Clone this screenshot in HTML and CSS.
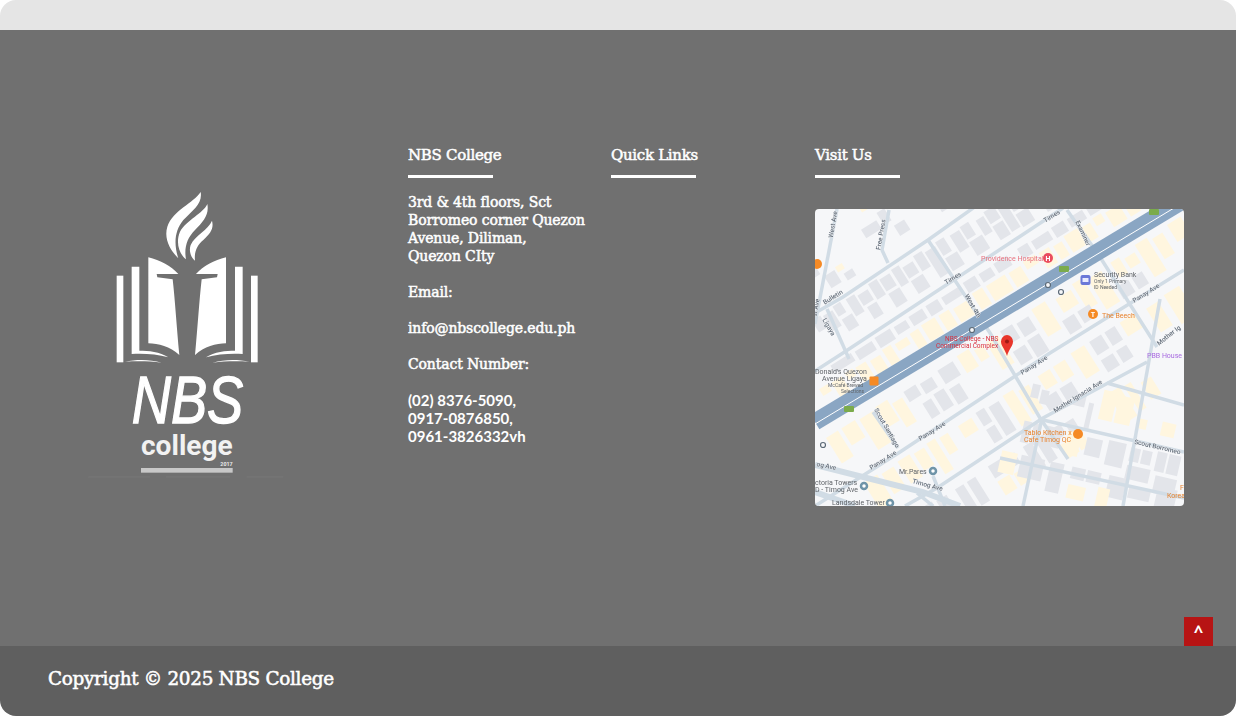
FILE: index.html
```html
<!DOCTYPE html>
<html lang="en">
<head>
<meta charset="utf-8">
<title>NBS College</title>
<link rel="stylesheet" href="styles.css">
</head>
<body>
<div class="page">
  <div class="topband"></div>
  <main class="main">
    <div class="logo-col">
      <svg class="logo" viewBox="0 0 660 930" role="img" aria-label="NBS College logo">
        <g class="logo-w">
          <path d="M362 36C340 70 280 90 262 140C250 180 275 215 295 235C280 190 285 150 310 120C340 90 368 70 362 36Z"/>
          <path d="M382 72C370 100 320 120 300 155C285 190 300 225 318 238C312 205 320 175 345 150C370 125 388 105 382 72Z"/>
          <path d="M396 122C385 150 345 165 332 195C325 215 335 235 345 242C342 215 352 195 370 180C392 160 402 145 396 122Z"/>
          <path d="M205 232C240 240 275 260 295 282L230 282L232 292L278 298C285 360 290 440 298 525C270 500 235 490 205 490Z"/>
          <path d="M438 232C403 240 368 260 348 282L413 282L411 292L365 298C358 360 353 440 345 525C373 500 408 490 438 490Z"/>
          <path d="M155 260H178V512C205 512 240 515 265 532C230 522 190 520 155 522Z"/>
          <path d="M488 260H465V512C438 512 403 515 378 532C413 522 453 520 488 522Z"/>
          <path d="M110 287H130V547H110Z"/>
          <path d="M513 287H533V547H513Z"/>
          <path d="M135 545C170 538 210 538 245 548C210 543 170 543 135 545Z"/>
          <path d="M508 545C473 538 433 538 398 548C433 543 473 543 508 545Z"/>
        </g>
        <text class="logo-nbs" x="155" y="728" textLength="335" lengthAdjust="spacingAndGlyphs">NBS</text>
        <text class="logo-college" x="183" y="825" textLength="275" lengthAdjust="spacingAndGlyphs">college</text>
        <text class="logo-year" x="421" y="857" textLength="37" lengthAdjust="spacingAndGlyphs">2017</text>
        <rect class="logo-bar" x="183" y="864" width="275" height="14"/>
        <path class="logo-dash" d="M25 891H210M258 891H450M500 891H610"/>
      </svg>
    </div>

    <section class="col">
      <h2 class="col-title">NBS College</h2>
      <div class="col-body">
        <p>3rd &amp; 4th floors, Sct<br>Borromeo corner Quezon<br>Avenue, Diliman,<br>Quezon CIty</p>
        <p>Email:</p>
        <p>info@nbscollege.edu.ph</p>
        <p>Contact Number:</p>
        <p class="nums">(02) 8376-5090,<br>0917-0876850,<br>0961-3826332vh</p>
      </div>
    </section>

    <section class="col">
      <h2 class="col-title">Quick Links</h2>
    </section>

    <section class="col">
      <h2 class="col-title">Visit Us</h2>
      <svg class="map" viewBox="0 0 369 297" role="img" aria-label="Map of NBS College">
        <rect class="m-bg" width="369" height="297"/>
        <g transform="rotate(-32)">
          <path class="m-gray" d="M-62 93h10v14h-10zM-50 95h11v18h-11zM-37 92h9v12h-9zM-36 108h12v14h-12zM-22 93h10v20h-10zM-10 96h12v12h-12zM-8 111h11v14h-11zM5 92h10v18h-10zM17 94h12v14h-12zM17 111h13v16h-13zM32 92h9v20h-9zM43 96h12v13h-12zM43 112h14v15h-14zM58 92h10v18h-10zM70 95h12v30h-12zM84 92h10v16h-10zM84 111h14v15h-14zM100 94h11v20h-11zM113 92h10v15h-10zM113 110h15v16h-15zM130 95h9v18h-9zM141 92h12v14h-12zM141 109h12v16h-12zM155 96h10v28h-10zM167 93h11v15h-11zM167 111h14v15h-14zM183 95h11v18h-11zM196 92h13v14h-13zM196 109h13v17h-13zM211 95h11v30h-11zM224 93h12v15h-12zM224 111h14v14h-14z"/>
          <path class="m-gray" d="M-72 62h9v9h-9zM-40 46h10v12h-10zM-28 62h12v14h-12zM-10 70h10v8h-10zM28 42h18v10h-18zM50 36h9v14h-9zM58 56h12v12h-12zM74 34h14v11h-14zM92 42h9v9h-9zM106 52h12v18h-12zM122 42h14v12h-14zM122 58h16v18h-16zM142 44h12v12h-12zM142 60h14v16h-14zM160 52h10v22h-10zM174 30h14v14h-14zM174 50h14v22h-14zM192 38h10v12h-10zM192 54h14v20h-14zM210 30h12v14h-12zM210 50h10v24h-10zM226 40h12v30h-12zM242 50h12v20h-12zM258 44h12v26h-12zM274 48h14v20h-14zM292 52h12v20h-12z"/>
          <path class="m-yellow" d="M-60 78h8v6h-8zM-14 60h8v6h-8zM38 18h20v10h-20zM64 12h8v8h-8zM94 6h18v12h-18zM118 22h8v8h-8zM150 10h14v10h-14zM210 8h20v10h-20zM248 20h12v8h-12zM280 18h14v12h-14z"/>
          <path class="m-gray" d="M-70 141h24v9h-24zM-42 142h20v10h-20zM-18 141h18v12h-18zM4 142h14v9h-14zM22 141h16v11h-16zM42 141h14v12h-14zM60 142h22v9h-22zM86 141h14v12h-14zM104 142h14v10h-14zM122 141h16v11h-16zM150 141h12v12h-12zM166 142h20v10h-20zM190 141h14v12h-14zM208 142h18v10h-18zM230 141h16v11h-16zM250 142h14v10h-14zM268 141h18v12h-18z"/>
          <path class="m-yellow" d="M-92 155h10v8h-10zM-78 156h12v18h-12zM-62 155h9v8h-9zM-50 156h12v18h-12zM-34 158h12v16h-12zM-18 155h10v19h-10zM-4 157h14v8h-14zM14 156h10v18h-10zM28 155h16v19h-16zM48 156h12v18h-12zM64 158h20v16h-20zM88 155h12v19h-12zM104 156h22v18h-22zM130 157h14v17h-14zM148 155h14v9h-14zM166 156h12v18h-12zM182 158h10v16h-10zM196 155h16v19h-16zM216 157h10v17h-10zM230 155h10v9h-10zM244 157h16v17h-16zM264 155h12v19h-12zM280 157h12v17h-12z"/>
          <path class="m-yellow" d="M-112 200h14v30h-14zM-94 200h16v20h-16zM-74 202h16v36h-16zM-54 200h14v24h-14zM-38 206h12v28h-12zM42 200h14v20h-14zM60 204h10v14h-10zM74 204h14v32h-14zM130 200h16v32h-16zM156 204h18v16h-18zM178 200h12v30h-12zM194 204h16v36h-16zM222 202h10v18h-10zM236 206h12v12h-12zM252 200h14v38h-14zM270 204h12v24h-12zM290 200h16v20h-16zM310 204h12v30h-12z"/>
          <path class="m-gray" d="M-22 202h14v12h-14zM-4 204h14v12h-14zM-12 222h10v18h-10zM2 220h12v20h-12zM18 202h18v16h-18zM18 224h12v18h-12zM92 202h14v16h-14zM110 204h14v16h-14zM92 226h14v16h-14zM110 224h14v20h-14zM150 226h14v16h-14zM168 226h14v14h-14zM214 226h14v14h-14zM232 226h12v14h-12z"/>
          <path class="m-yellow" d="M-104 258h16v32h-16zM-84 260h14v24h-14zM-64 258h14v26h-14zM-46 260h12v20h-12zM-30 258h10v36h-10zM-16 260h10v20h-10zM6 260h16v14h-16zM60 258h12v36h-12zM76 262h12v28h-12zM100 260h14v16h-14zM118 260h14v18h-14zM140 258h16v30h-16zM198 258h18v16h-18zM228 260h14v28h-14zM250 258h18v34h-18z"/>
          <path class="m-gray" d="M28 258h10v16h-10zM28 278h10v16h-10zM42 260h12v34h-12zM92 282h16v14h-16zM112 282h14v14h-14zM162 258h14v16h-14zM180 258h12v16h-12zM162 280h14v14h-14zM180 280h12v14h-12zM274 260h12v30h-12zM290 262h12v24h-12z"/>
          <path class="m-gray" d="M-70 310h14v14h-14zM-52 312h12v14h-12zM-30 312h10v28h-10zM-16 312h10v28h-10zM10 310h14v14h-14zM28 312h12v12h-12zM50 312h10v28h-10zM64 312h10v28h-10zM82 312h12v12h-12zM98 314h10v12h-10z"/>
          <path class="m-yellow" d="M-70 330h14v14h-14zM-52 330h12v14h-12zM10 328h14v16h-14zM28 330h12v14h-12zM82 330h14v16h-14zM98 332h10v14h-10zM150 312h14v34h-14zM168 314h8v30h-8zM184 320h12v20h-12z"/>
        </g>
        <g transform="rotate(13 280 240)">
          <path class="m-gray" d="M205 190h8v14h-8zM215 194h8v14h-8zM246 190h14v12h-14zM264 196h5v26h-5zM205 228h8v22h-8zM215 228h8v22h-8zM228 228h16v20h-16zM270 230h16v18h-16zM292 228h18v25h-18zM315 230h10v14h-10zM327 230h10v14h-10zM315 248h24v14h-24zM342 228h10v20h-10zM354 228h12v20h-12zM345 252h22v18h-22zM210 262h24v22h-24zM240 262h14v30h-14zM262 262h14v12h-14zM278 262h14v12h-14zM300 262h18v22h-18zM322 268h22v12h-22zM350 262h20v24h-20z"/>
          <path class="m-yellow" d="M276 180h14v30h-14zM292 182h16v28h-16zM250 228h14v24h-14zM296 190h10v8h-10zM190 262h16v22h-16zM262 280h18v14h-18zM292 276h12v20h-12zM340 198h14v14h-14zM315 200h10v10h-10z"/>
        </g>
        <g class="m-road">
          <path d="M22 0L0 115"/>
          <path d="M185 -20L113 31L28 88L0 104"/>
          <path d="M248 -1L28 144L0 162"/>
          <path d="M74 1L67 41L73 54"/>
          <path d="M113 31L175 124L225 209L253 250"/>
          <path d="M252 1L285 48L342 138"/>
          <path d="M12 100L34 150"/>
          <path d="M369 61L235 144L85 243L0 297"/>
          <path d="M332 153L228 209L122 279L90 297"/>
          <path d="M228 211L369 243"/>
          <path d="M335 146L308 297"/>
          <path d="M345 90L335 146"/>
          <path d="M292 174L369 196"/>
          <path d="M185 249L369 289"/>
          <path d="M227 209L208 297"/>
          <path d="M58 203L83 239"/>
          <path d="M102 284L118 297"/>
          <path d="M118 267L130 297"/>
        </g>
        <path class="m-road-wide" d="M0 256L108 283L145 297"/>
        <path class="m-road-wide" d="M0 283L20 290L40 297"/>
        <path class="m-hw" d="M0 213L369 -9"/>
        <path class="m-hw-line" d="M0 215L369 -7"/>

        <g class="m-lbl-road">
          <text transform="rotate(-80 20 16)" x="20" y="16">West Ave</text>
          <text transform="rotate(-80 68 26)" x="68" y="26">Free Press</text>
          <text transform="rotate(-80 3 99)" x="3" y="99">st Ave</text>
          <text transform="rotate(-32 19 90)" x="19" y="90">Bulletin</text>
          <text transform="rotate(-32 139 71)" x="139" y="71">Times</text>
          <text transform="rotate(-32 238 9)" x="238" y="9">Times</text>
          <text transform="rotate(60 156 98)" x="156" y="98">West 4th</text>
          <text transform="rotate(60 12 119)" x="12" y="119">Ligaya</text>
          <text transform="rotate(65 266 25)" x="266" y="25">Examiner</text>
          <text transform="rotate(-32 332 86)" x="332" y="86">Panay Ave</text>
          <text transform="rotate(-38 355 128)" x="355" y="128">Mother Ig</text>
          <text transform="rotate(60 70 220)" x="70" y="220">Scout Santiago</text>
          <text transform="rotate(-32 118 224)" x="118" y="224">Panay Ave</text>
          <text transform="rotate(-32 69 253)" x="69" y="253">Panay Ave</text>
          <text transform="rotate(12 11 259)" x="11" y="259">og Ave</text>
          <text transform="rotate(15 112 278)" x="112" y="278">Timog Ave</text>
          <text transform="rotate(-32 220 158)" x="220" y="158">Panay Ave</text>
          <text transform="rotate(-32 264 189)" x="264" y="189">Mother Ignacia Ave</text>
          <text transform="rotate(13 342 240)" x="342" y="240">Scout Borromeo</text>
        </g>

        <text class="m-red" x="166" y="52">Providence Hospital</text>
        <circle class="m-pin-red" cx="233" cy="49" r="5"/>
        <text class="m-pin-h" x="233" y="51.500">H</text>
        <text class="m-dred" x="130" y="132">NBS College - NBS</text>
        <text class="m-dred" x="121" y="138.500">Commercial Complex</text>
        <path class="m-marker" d="M192 147C190 140 186 137 186 132.500A6 6.500 0 0 1 198 132.500C198 137 194 140 192 147Z"/>
        <circle class="m-marker-dot" cx="192" cy="132.500" r="2"/>

        <rect class="m-bank" x="265.500" y="66" width="10" height="10" rx="2"/>
        <rect class="m-bank-in" x="267.500" y="69" width="6" height="4"/>
        <text class="m-grey" x="279" y="68">Security Bank</text>
        <text class="m-small" x="279" y="74">Only 1 Primary</text>
        <text class="m-small" x="279" y="79.500">ID Needed</text>

        <circle class="m-pin-or" cx="278" cy="105" r="5"/>
        <text class="m-pin-h" x="278" y="107.500">T</text>
        <text class="m-or" x="287" y="109">The Beech</text>
        <circle class="m-pin-or" cx="2" cy="55" r="5"/>
        <rect class="m-pin-or" x="54.500" y="167.500" width="9" height="9" rx="1"/>
        <circle class="m-pin-or" cx="263" cy="225" r="5"/>
        <text class="m-or" x="209" y="226">Tablo Kitchen x</text>
        <text class="m-or" x="209" y="232.500">Cafe Timog QC</text>
        <text class="m-or" x="365" y="281">F</text>
        <text class="m-or" x="352" y="289">Korea</text>
        <text class="m-purple" x="332" y="149">PBB House</text>

        <text class="m-grey" x="0" y="165">Donald's Quezon</text>
        <text class="m-grey" x="7" y="172">Avenue Ligaya</text>
        <text class="m-small" x="13" y="178">McCafé Brewed</text>
        <text class="m-small" x="26" y="183.500">Selections</text>
        <text class="m-grey" x="84" y="265">Mr.Pares</text>
        <text class="m-grey" x="0" y="276">ctoria Towers</text>
        <text class="m-grey" x="0" y="283">D - Timog Ave</text>
        <text class="m-grey" x="17" y="296">Landsdale Tower</text>

        <g class="m-teal">
          <circle cx="118" cy="262" r="3"/>
          <circle cx="49" cy="277" r="3"/>
          <circle cx="75" cy="294" r="3"/>
        </g>
        <g class="m-shield">
          <rect x="244" y="57" width="10" height="6" rx="1"/>
          <rect x="334" y="0" width="10" height="6" rx="1"/>
          <rect x="29" y="197" width="10" height="6" rx="1"/>
        </g>
        <g class="m-transit">
          <circle cx="157" cy="121" r="2.500"/>
          <circle cx="233" cy="76" r="2.500"/>
          <circle cx="246" cy="83" r="2.500"/>
          <circle cx="8" cy="236" r="2.500"/>
        </g>
      </svg>
    </section>
    <a class="to-top" href="#">^</a>
  </main>
  <footer class="footer">Copyright © 2025 NBS College</footer>
</div>
</body>
</html>
```

FILE: styles.css
```css
html, body {
  margin: 0;
  padding: 0;
  background: #fff;
}

.page {
  display: flex;
  flex-direction: column;
  height: 716px;
  overflow: hidden;
  border-radius: 16px;
  font-family: "DejaVu Serif", serif;
  color: #fff;
}

.topband {
  height: 30px;
  background: #e5e5e5;
}

.main {
  position: relative;
  display: grid;
  grid-template-columns: 328px 203px 204px 369px;
  align-items: start;
  flex: 1;
  box-sizing: border-box;
  padding: 114px 0 0 80px;
  background: #707070;
}

.logo-col {
  padding-top: 36px;
}

.logo {
  display: block;
  width: 220px;
  height: 310px;
}

.logo-w { fill: #fff; }

.logo-nbs {
  font: italic 400 200px "Liberation Sans", sans-serif;
  fill: #fff;
  stroke: #fff;
  stroke-width: 4px;
}

.logo-college {
  font: 700 82px Roboto, sans-serif;
  fill: #f2f2f2;
}

.logo-year {
  font: 700 14px Roboto, sans-serif;
  fill: #e8e8e8;
}

.logo-bar { fill: #c8c8c8; }

.logo-dash {
  fill: none;
  stroke: #7d7d7d;
  stroke-width: 2;
}

.col-title {
  width: 85px;
  margin: 0;
  padding-bottom: 9px;
  border-bottom: 3px solid #fff;
  font-size: 15px;
  font-weight: 400;
  line-height: 22px;
  letter-spacing: -0.3px;
  white-space: nowrap;
  -webkit-text-stroke: 0.5px #fff;
}

.col-body {
  margin-top: 15px;
  font-size: 14px;
  line-height: 18px;
  letter-spacing: -0.14px;
  -webkit-text-stroke: 0.5px #fff;
}

.col-body p {
  margin: 0 0 18px;
}

.col-body .nums {
  margin: 0;
  font-family: Lato, sans-serif;
  font-size: 15px;
  font-weight: 700;
  letter-spacing: 0;
  -webkit-text-stroke: 0;
}

.map {
  display: block;
  width: 369px;
  height: 297px;
  margin-top: 31px;
  border-radius: 4px;
  filter: blur(0.4px);
}

.m-bg { fill: #f6f7f9; }
.m-gray { fill: #e3e5ea; }
.m-yellow { fill: #fff6df; }

.m-road {
  fill: none;
  stroke: #d1dce5;
  stroke-width: 3.500;
}

.m-road-wide {
  fill: none;
  stroke: #d1dce5;
  stroke-width: 6;
}

.m-hw {
  fill: none;
  stroke: #8aa6c3;
  stroke-width: 17;
}

.m-hw-line {
  fill: none;
  stroke: #fff;
  stroke-width: 1;
}

.map text {
  font-family: Roboto, sans-serif;
}

.m-lbl-road text {
  font-size: 6.500px;
  font-weight: 500;
  fill: #66707c;
  text-anchor: middle;
  stroke: #f6f7f9;
  stroke-width: 0.6px;
  paint-order: stroke;
}

.m-red { font-size: 7px; fill: #e8717f; }
.m-dred { font-size: 6.500px; fill: #d9303f; }
.m-grey { font-size: 7px; fill: #5f6368; }
.m-small { font-size: 5px; fill: #5f6368; }
.m-or { font-size: 7px; fill: #e8832e; }
.m-purple { font-size: 7px; fill: #a86be0; }

.map .m-pin-h { font-size: 7px; font-weight: 700; fill: #fff; text-anchor: middle; }
.m-pin-red { fill: #ea4c5f; }
.m-pin-or { fill: #f58a25; }
.m-marker { fill: #e8352b; }
.m-marker-dot { fill: #a11a14; }
.m-bank { fill: #6b78d8; }
.m-bank-in { fill: #e8eaff; }
.m-teal { fill: #fff; stroke: #6f94a8; stroke-width: 2.500; }
.m-shield { fill: #7bab4c; }
.m-transit { fill: #f6f7f9; stroke: #5d6b78; stroke-width: 1.200; }

.to-top {
  position: absolute;
  right: 23px;
  bottom: 0;
  width: 29px;
  height: 29px;
  background: #b71414;
  color: #fff;
  font: 700 18px/32px Lato, sans-serif;
  text-align: center;
  text-decoration: none;
}

.footer {
  height: 70px;
  box-sizing: border-box;
  padding-left: 48px;
  background: #5f5f5f;
  font-size: 18.400px;
  line-height: 66px;
  letter-spacing: -0.3px;
  -webkit-text-stroke: 0.55px #fff;
}
```
